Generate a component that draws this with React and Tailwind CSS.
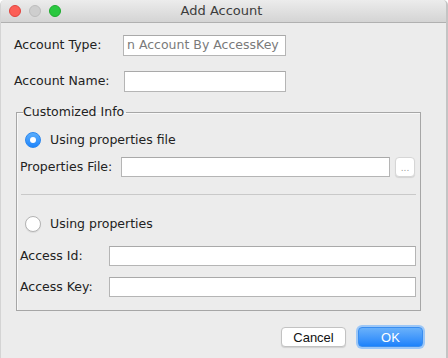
import React from "react";

const font = { fontFamily: '"DejaVu Sans", "Lucida Grande", sans-serif' };

function Radio({ checked }) {
  return checked ? (
    <span className="flex items-center justify-center w-[16px] h-[16px] rounded-full bg-gradient-to-b from-[#5aaefc] to-[#1c84fb] border border-[#2a86ee]">
      <span className="w-[6px] h-[6px] rounded-full bg-white" />
    </span>
  ) : (
    <span className="w-[16px] h-[16px] rounded-full bg-white border border-[#b3b3b3] shadow-[0_1px_1px_rgba(0,0,0,0.08)]" />
  );
}

function Field({ className = "", children }) {
  return (
    <div
      className={
        "bg-white border border-[#b5b5b5] border-t-[#a9a9a9] flex items-center overflow-hidden whitespace-nowrap " +
        className
      }
    >
      {children}
    </div>
  );
}

export default function App() {
  return (
    <div
      className="w-[448px] h-[358px] bg-[#ececec] flex flex-col text-[12.5px] text-[#222] border-l border-[#d4d4d4] border-r-2 border-r-[#c4c4c4] rounded-t-[5px] overflow-hidden"
      style={font}
    >
      {/* title bar */}
      <div className="h-[23px] shrink-0 flex items-center relative bg-gradient-to-b from-[#ececec] to-[#d4d4d4] border-b border-[#b0b0b0]">
        <div className="flex items-center gap-[8px] pl-[8px]">
          <span className="w-[12px] h-[12px] rounded-full bg-[#fc5f57] border border-[#e0443e]" />
          <span className="w-[12px] h-[12px] rounded-full bg-[#cecece] border border-[#bcbcbc]" />
          <span className="w-[12px] h-[12px] rounded-full bg-[#2ac840] border border-[#1eab2f]" />
        </div>
        <div className="flex-1 text-center text-[13px] text-[#3c3c3c] pr-[60px] ml-[-4px]">Add Account</div>
      </div>

      {/* top rows */}
      <div className="flex flex-col pt-[12px] pl-[13px]">
        <div className="flex items-center h-[21px]">
          <span className="w-[109px]">Account Type:</span>
          <Field className="w-[163px] h-[21px] pl-[3px] text-[#7a7a7a]">n Account By AccessKey</Field>
        </div>
        <div className="flex items-center h-[21px] mt-[15px]">
          <span className="w-[110px]">Account Name:</span>
          <Field className="w-[162px] h-[21px]" />
        </div>
      </div>

      {/* group */}
      <fieldset className="mt-[12px] ml-[15px] w-[405px] border border-[#a6a6a6] px-[3px] pb-[13px] shadow-[inset_1px_1px_0_#f8f8f8]">
        <legend className="ml-[3px] pr-[2px] h-[16px] leading-[16px] text-[12.5px]">Customized Info</legend>
        <div className="flex items-center h-[20px] mt-[10px] pl-[5px] gap-[9px]">
          <Radio checked />
          <span>Using properties file</span>
        </div>
        <div className="flex items-center h-[20px] mt-[7px]">
          <span className="w-[101px]">Properties File:</span>
          <Field className="w-[269px] h-[20px]" />
          <div className="ml-[5px] w-[20px] h-[20px] rounded-[4px] bg-white border border-[#d6d6d6] shadow-[0_1px_1px_rgba(0,0,0,0.1)] flex items-center justify-center text-[9px] text-[#999] leading-none pt-[2px]">
            ...
          </div>
        </div>
        <div className="mt-[17px] ml-[1px] mr-[1px] h-px bg-[#c9c9c9]" />
        <div className="flex items-center h-[20px] mt-[19px] pl-[5px] gap-[9px]">
          <Radio />
          <span>Using properties</span>
        </div>
        <div className="flex items-center h-[20px] mt-[12px]">
          <span className="w-[89px]">Access Id:</span>
          <Field className="w-[307px] h-[20px]" />
        </div>
        <div className="flex items-center h-[20px] mt-[11px]">
          <span className="w-[89px]">Access Key:</span>
          <Field className="w-[307px] h-[20px]" />
        </div>
      </fieldset>

      {/* buttons */}
      <div className="flex justify-end items-center mt-[14px] pr-[21px] gap-[10px]" style={{ fontFamily: '"Liberation Sans", Arial, sans-serif' }}>
        <button className="w-[65px] h-[20px] rounded-[4px] bg-white border border-[#c2c2c2] shadow-[0_1px_1px_rgba(0,0,0,0.12)] text-[13px] text-[#111] leading-none">
          Cancel
        </button>
        <button className="w-[69px] h-[24px] rounded-[6px] bg-[#9cc7f7] p-[2px] flex">
          <span className="flex-1 rounded-[4px] bg-gradient-to-b from-[#69b1fa] to-[#1b82fb] border border-[#3a8ef0] text-white text-[13px] flex items-center justify-center leading-none">
            OK
          </span>
        </button>
      </div>
    </div>
  );
}
